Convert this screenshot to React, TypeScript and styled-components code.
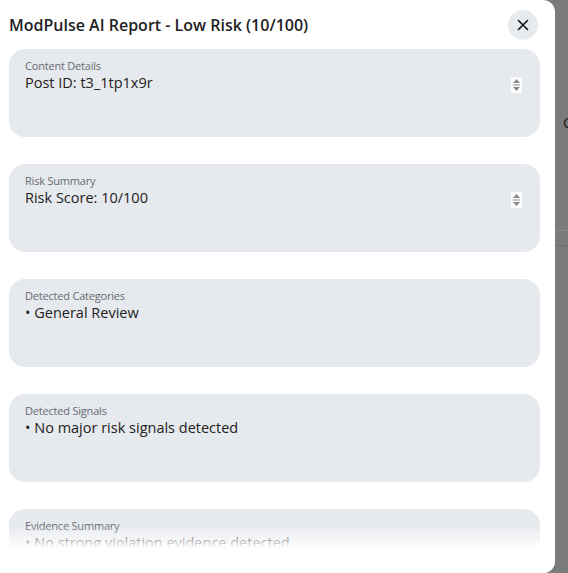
import styled, { createGlobalStyle } from "styled-components"

const Global = createGlobalStyle`
  html, body {
    margin: 0;
    padding: 0;
    height: 100%;
    overflow: hidden;
    background: #7b7b7b;
    font-family: "Open Sans", "Noto Sans", sans-serif;
  }
`

const Screen = styled.div`
  display: flex;
  width: 568px;
  height: 573px;
`

const Panel = styled.div`
  position: relative;
  width: 555px;
  height: 573px;
  background: #ffffff;
  border-radius: 0 12px 12px 0;
  overflow: hidden;
  flex-shrink: 0;
  &::after {
    content: "";
    position: absolute;
    left: 0;
    right: 0;
    bottom: 0;
    height: 48px;
    background: linear-gradient(to bottom, rgba(255,255,255,0) 0%, rgba(255,255,255,0.6) 30%, #fff 48%);
  }
`

const Header = styled.div`
  display: flex;
  align-items: center;
  justify-content: space-between;
  padding: 10px 17px 9px 9px;
`

const Title = styled.h2`
  margin: 0;
  font-size: 16px;
  font-weight: 600;
  color: #222;
`

const Close = styled.button`
  width: 30px;
  height: 30px;
  border: none;
  border-radius: 50%;
  background: #e8ebee;
  display: flex;
  align-items: center;
  justify-content: center;
  padding: 0;
  color: #111;
`

const List = styled.div`
  display: flex;
  flex-direction: column;
  gap: 27px;
  padding: 0 15px 0 9px;
`

const Card = styled.div`
  position: relative;
  height: 88px;
  background: #e6e9ed;
  border-radius: 16px;
  padding: 10px 16px;
  box-sizing: border-box;
`

const Label = styled.div`
  font-size: 11px;
  color: #676b71;
  line-height: 14px;
  letter-spacing: -0.2px;
`

const Value = styled.div`
  font-size: 14.5px;
  color: #222;
  line-height: 19px;
`

const Spinner = styled.div`
  position: absolute;
  right: 18px;
  top: 28px;
  width: 11px;
  height: 16px;
  background: #fdfdfd;
  display: flex;
  align-items: center;
  justify-content: center;
`

const Backdrop = styled.div`
  flex: 1;
  position: relative;
  overflow: hidden;
  color: #1a1a1a;
  font-size: 15px;
`

const Letter = styled.span`
  position: absolute;
  left: 8px;
  top: 112px;
`

const Rule = styled.div<{ top: number; shade: string }>`
  position: absolute;
  left: 0;
  right: 0;
  top: ${p => p.top}px;
  height: 1px;
  background: ${p => p.shade};
`

const cards = [
  { label: "Content Details", value: "Post ID: t3_1tp1x9r", spin: true },
  { label: "Risk Summary", value: "Risk Score: 10/100", spin: true },
  { label: "Detected Categories", value: "• General Review" },
  { label: "Detected Signals", value: "• No major risk signals detected" },
  { label: "Evidence Summary", value: "• No strong violation evidence detected" },
]

export default function App() {
  return (
    <Screen>
      <Global />
      <Panel>
        <Header>
          <Title>ModPulse AI Report - Low Risk (10/100)</Title>
          <Close aria-label="close">
            <svg width="12" height="12" viewBox="0 0 12 12">
              <path d="M1.5 1.5 L10.5 10.5 M10.5 1.5 L1.5 10.5" stroke="#111" strokeWidth="1.6" strokeLinecap="round" />
            </svg>
          </Close>
        </Header>
        <List>
          {cards.map(c => (
            <Card key={c.label}>
              <Label>{c.label}</Label>
              <Value>{c.value}</Value>
              {c.spin && (
                <Spinner>
                  <svg width="9" height="14" viewBox="0 0 9 14">
                    <path d="M4.5 1 L8 5 L1 5 Z" fill="#8a8a8a" />
                    <rect x="1" y="6.5" width="7" height="1" fill="#8a8a8a" />
                    <path d="M1 9 L8 9 L4.5 13 Z" fill="#8a8a8a" />
                  </svg>
                </Spinner>
              )}
            </Card>
          ))}
        </List>
      </Panel>
      <Backdrop>
        <Letter>C</Letter>
        <Rule top={230} shade="#8a8a8a" />
        <Rule top={245} shade="#6c6c6c" />
      </Backdrop>
    </Screen>
  )
}
